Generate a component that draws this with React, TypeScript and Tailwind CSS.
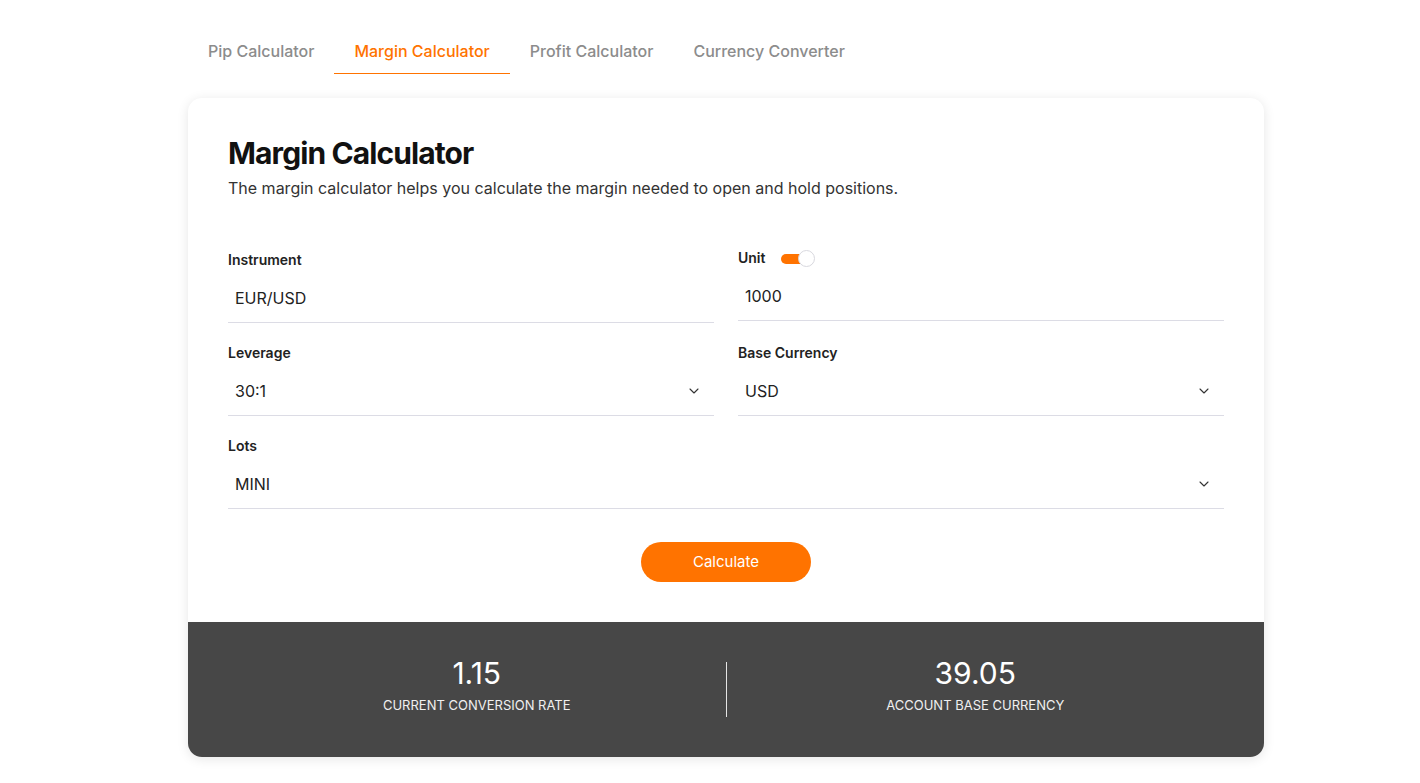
import React from "react";
import { ChevronDown } from "lucide-react";

const tabs = ["Pip Calculator", "Margin Calculator", "Profit Calculator", "Currency Converter"];

function Field({
  label,
  value,
  select,
  extra,
  className = "",
}: {
  label: string;
  value: string;
  select?: boolean;
  extra?: React.ReactNode;
  className?: string;
}) {
  return (
    <div className={"flex flex-col " + className}>
      <div className="flex h-5 items-center text-sm font-semibold leading-5 text-[#222]">
        {label}
        {extra}
      </div>
      <div className="mt-[5px] flex h-12 items-center justify-between border-b border-[#dcdce5] pb-[2px] pl-[7px] pr-3">
        <span className="text-base text-[#222]">{value}</span>
        {select && <ChevronDown size={16} strokeWidth={1.6} className="text-[#333]" />}
      </div>
    </div>
  );
}

export default function App() {
  return (
    <div
      className="min-h-[783px] bg-white pb-[26px]"
      style={{ fontFamily: "Inter, 'Noto Sans', sans-serif" }}
    >
      <div className="ml-[188px] w-[1076px]">
        <div className="flex pt-[39px]">
          {tabs.map((t, i) => (
            <div
              key={t}
              className={
                i === 1
                  ? "border-b border-[#ff7300] px-5 pb-[10px] text-base font-medium leading-6 text-[#ff7300]"
                  : "border-b border-transparent px-5 pb-[10px] text-base font-medium leading-6 text-[#8c8c8c]"
              }
            >
              {t}
            </div>
          ))}
        </div>

        <div className="mt-6 overflow-hidden rounded-[14px] bg-white shadow-[0_2px_12px_rgba(0,0,0,0.10)]">
          <div className="px-10 pb-10 pt-[37px]">
            <h1 className="text-[30px] font-bold leading-9 tracking-[-0.03em] text-[#111]">
              Margin Calculator
            </h1>
            <p className="mt-[5px] text-base leading-6 text-[#333]">
              The margin calculator helps you calculate the margin needed to open and hold positions.
            </p>

            <div className="mt-[48px] grid grid-cols-2 gap-x-6 gap-y-5">
              <Field label="Instrument" value="EUR/USD" className="mt-[2px]" />
              <Field
                label="Unit"
                value="1000"
                extra={
                  <span className="relative ml-4 inline-block h-[17px] w-[34px]">
                    <span className="absolute left-0 top-[4px] h-[10px] w-[30px] rounded-full bg-[#ff7300]" />
                    <span className="absolute right-0 top-0 h-[17px] w-[17px] rounded-full border border-[#d8d8de] bg-white" />
                  </span>
                }
              />
              <Field label="Leverage" value="30:1" select />
              <Field label="Base Currency" value="USD" select />
              <Field label="Lots" value="MINI" select className="col-span-2" />
            </div>

            <div className="mt-[33px] flex justify-center">
              <button className="h-10 w-[170px] rounded-full bg-[#ff7300] text-[15px] text-white">
                Calculate
              </button>
            </div>
          </div>

          <div className="flex h-[135px] items-center bg-[#474747] px-10">
            <div className="flex flex-1 flex-col items-center pb-3">
              <div className="text-[30px] leading-9 text-white">1.15</div>
              <div className="mt-[6px] text-[13px] leading-4 text-[#f0f0f0]">CURRENT CONVERSION RATE</div>
            </div>
            <div className="h-[55px] w-px bg-[#e5e5e5]" />
            <div className="flex flex-1 flex-col items-center pb-3">
              <div className="text-[30px] leading-9 text-white">39.05</div>
              <div className="mt-[6px] text-[13px] leading-4 text-[#f0f0f0]">ACCOUNT BASE CURRENCY</div>
            </div>
          </div>
        </div>
      </div>
    </div>
  );
}
